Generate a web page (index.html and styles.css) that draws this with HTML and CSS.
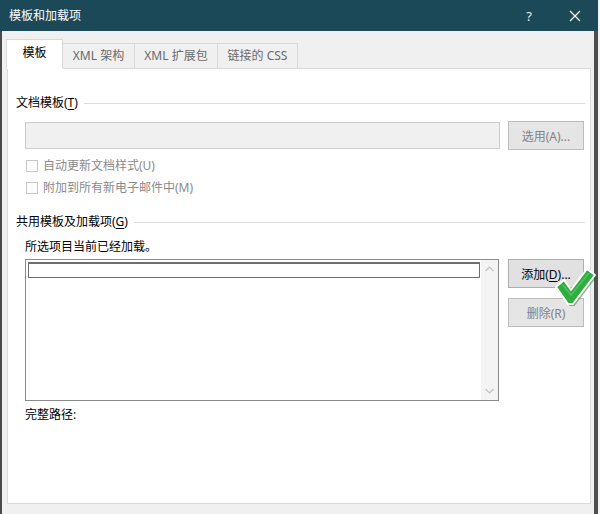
FILE: index.html
```html
<!DOCTYPE html>
<html lang="zh-CN">
<head>
<meta charset="utf-8">
<title>模板和加载项</title>
<link rel="stylesheet" href="styles.css">
</head>
<body>
<div class="window">
  <div class="titlebar">
    <span class="title">模板和加载项</span>
    <span class="tb-btn help">?</span>
    <span class="tb-btn close">
      <svg width="12" height="12" viewBox="0 0 12 12"><path d="M1 1 L11 11 M11 1 L1 11" stroke="#ffffff" stroke-width="1.2" fill="none"/></svg>
    </span>
  </div>
  <div class="body">
    <div class="tabs">
      <div class="tab active">模板</div>
      <div class="tab t2">XML 架构</div>
      <div class="tab t3">XML 扩展包</div>
      <div class="tab t4">链接的 CSS</div>
    </div>
    <div class="panel">
      <div class="section-head"><span>文档模板(<u>T</u>)</span><span class="rule"></span></div>
      <div class="template-row">
        <div class="input"></div>
        <button class="btn disabled">选用(A)...</button>
      </div>
      <div class="check first"><span class="box"></span><span>自动更新文档样式(U)</span></div>
      <div class="check"><span class="box"></span><span>附加到所有新电子邮件中(M)</span></div>
      <div class="section-head second"><span>共用模板及加载项(<u>G</u>)</span><span class="rule"></span></div>
      <div class="hint">所选项目当前已经加载。</div>
      <div class="list-row">
        <div class="listbox">
          <div class="items"><div class="item focus"></div></div>
          <div class="scrollbar">
            <svg width="9" height="6" viewBox="0 0 9 6"><path d="M0.5 5 L4.5 1 L8.5 5" stroke="#c2c2c2" stroke-width="1.2" fill="none"/></svg>
            <svg width="9" height="6" viewBox="0 0 9 6"><path d="M0.5 1 L4.5 5 L8.5 1" stroke="#c2c2c2" stroke-width="1.2" fill="none"/></svg>
          </div>
        </div>
        <div class="btn-col">
          <button class="btn">添加(<u>D</u>)...</button>
          <button class="btn disabled">删除(R)</button>
        </div>
      </div>
      <div class="path">完整路径:</div>
      <svg class="checkmark" width="48" height="44" viewBox="0 0 48 44">
        <path d="M6 23 L14 16 L21 26 L37 5 L45 11 L23 40 L18 40 Z" fill="#1d6b2a" transform="translate(1.5,2)" opacity="0.5"/>
        <path d="M6 23 L14 16 L21 26 L37 5 L45 11 L23 40 L18 40 Z" fill="#2eae3e" stroke="#ffffff" stroke-width="2" stroke-linejoin="round"/>
        <path d="M13 21 L21 31 L39 9" fill="none" stroke="#6bd474" stroke-width="1.5" opacity="0.55"/>
      </svg>
    </div>
  </div>
</div>
</body>
</html>
```
FILE: styles.css
```css
* { box-sizing: border-box; }
html, body { margin: 0; padding: 0; }
body {
  width: 600px;
  height: 514px;
  overflow: hidden;
  background: #f4f4f4;
  font-family: "Noto Sans", "Noto Sans CJK SC", sans-serif;
  font-size: 12px;
  line-height: 16px;
  color: #000;
}
u { text-decoration: underline; text-underline-offset: 2px; }

.window {
  width: 598px;
  height: 514px;
  display: flex;
  flex-direction: column;
}

.titlebar {
  height: 31px;
  flex-shrink: 0;
  background: #1b4957;
  color: #fff;
  display: flex;
  align-items: center;
  padding-left: 9px;
}
.title { flex: 1; }
.tb-btn {
  width: 46px;
  height: 31px;
  display: flex;
  align-items: center;
  justify-content: center;
}
.help { font-size: 13px; color: #e8eef0; }

.body {
  flex: 1;
  background: #f0f0f0;
  border-left: 2px solid #4a4a4a;
  border-right: 4px solid #4f4f4f;
  padding: 8px 3px 10px 5px;
  display: flex;
  flex-direction: column;
}

.tabs {
  display: flex;
  align-items: flex-end;
  margin-left: -1px;
  height: 30px;
  margin-bottom: -1px;
  position: relative;
  z-index: 1;
}
.tab {
  height: 26px;
  background: #f0f0f0;
  border: 1px solid #d9d9d9;
  border-left: none;
  border-bottom: 1px solid #d9d9d9;
  display: flex;
  align-items: center;
  justify-content: center;
  color: #6a6a6a;
}
.tab.active {
  height: 30px;
  width: 57px;
  background: #fff;
  border-left: 1px solid #d9d9d9;
  border-bottom: 1px solid #fff;
  color: #000;
  padding-bottom: 2px;
}
.t2 { width: 72px; }
.t3 { width: 83px; }
.t4 { width: 80px; }

.panel {
  position: relative;
  flex: 1;
  background: #fff;
  border: 1px solid #d9d9d9;
  padding: 26px 6px 0 8px;
}

.section-head {
  display: flex;
  align-items: center;
  gap: 6px;
  height: 16px;
  margin-right: -1px;
}
.section-head.second { margin-top: 15px; }
.rule { flex: 1; height: 1px; background: #dcdcdc; }

.template-row {
  display: flex;
  align-items: center;
  gap: 8px;
  margin-top: 10px;
  height: 29px;
  padding-left: 9px;
}
.input {
  flex: 1;
  height: 27px;
  background: #f0f0f0;
  border: 1px solid #cccccc;
}

.btn {
  width: 76px;
  height: 29px;
  padding: 0;
  background: #e1e1e1;
  border: 1px solid #adadad;
  font-family: inherit;
  font-size: 12px;
  color: #000;
}
.btn.disabled {
  background: #e5e5e5;
  border-color: #bcbcbc;
  color: #838383;
}

.check {
  display: flex;
  align-items: center;
  gap: 5px;
  height: 22px;
  padding-left: 10px;
  color: #8a8a8a;
}
.check.first { margin-top: 5px; }
.box {
  width: 12px;
  height: 12px;
  border: 1px solid #c8c8c8;
  background: #fcfcfc;
}

.hint { margin-top: 9px; padding-left: 9px; }

.list-row {
  display: flex;
  gap: 9px;
  margin-top: 4px;
  padding-left: 9px;
}
.listbox {
  flex: 1;
  height: 142px;
  border: 1px solid #8a8a8a;
  display: flex;
  background: #fff;
}
.items { flex: 1; padding: 2px 1px 0 2px; }
.item.focus {
  height: 16px;
  border: 1px solid #6e6e6e;
  border-top-width: 2px;
}
.scrollbar {
  width: 17px;
  background: #f4f4f4;
  display: flex;
  flex-direction: column;
  justify-content: space-between;
  align-items: center;
  padding: 6px 0 6px;
}
.btn-col {
  display: flex;
  flex-direction: column;
  gap: 10px;
}

.path { margin-top: 6px; padding-left: 9px; }

.checkmark {
  position: absolute;
  left: 542px;
  top: 195px;
}
```
